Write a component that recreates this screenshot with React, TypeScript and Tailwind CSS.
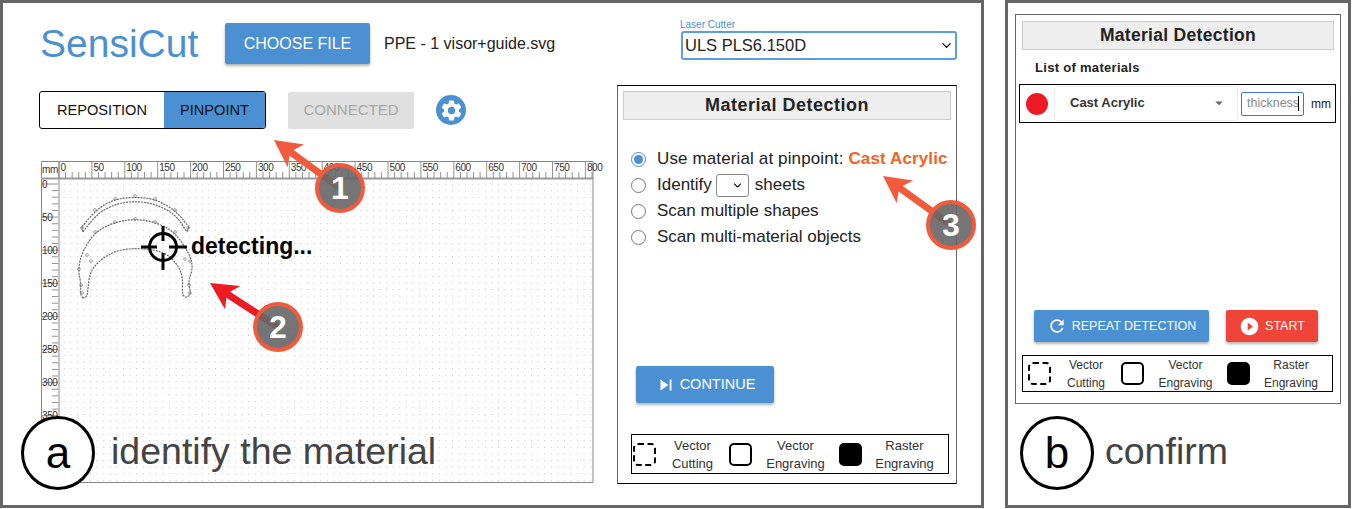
import { MdSkipNext, MdRefresh, MdPlayCircleFilled, MdArrowDropDown, MdSettings } from 'react-icons/md';
import { IoChevronDown } from 'react-icons/io5';

const sans = "font-['Liberation_Sans',Arial,sans-serif]";

type Pt = [number, number];

// smooth line through the points, used for the visor outline
function smooth(pts: Pt[], close = false) {
  const list = close ? [...pts, pts[0]] : pts;
  let d = `M${list[0][0]} ${list[0][1]}`;
  for (let i = 1; i < list.length - 1; i++) {
    const mx = (list[i][0] + list[i + 1][0]) / 2;
    const my = (list[i][1] + list[i + 1][1]) / 2;
    d += `Q${list[i][0]} ${list[i][1]} ${mx} ${my}`;
  }
  const last = list[list.length - 1];
  return `${d}L${last[0]} ${last[1]}`;
}

const visorOuter: Pt[] = [[41, 66], [54, 49], [74, 38], [94, 36], [114, 38], [134, 49], [148, 66]];
const visorInner: Pt[] = [[42, 71], [54, 54], [74, 43], [94, 40], [114, 43], [134, 53], [146, 71]];
const guide: Pt[] = [
  [42, 137], [39, 134], [40, 122], [37, 109], [41, 91], [54, 71], [74, 61], [94, 58], [114, 61], [134, 71],
  [149, 94], [152, 107], [147, 121], [150, 132], [146, 137], [141, 134], [142, 117], [137, 104], [124, 91],
  [99, 87], [76, 89], [59, 99], [49, 111], [47, 127], [46, 136],
];
const bumps: Pt[] = [
  [54, 49], [74, 38], [94, 35], [114, 38], [134, 49], [147, 67], [41, 67], [54, 71], [74, 61], [94, 58], [114, 61],
  [134, 71], [149, 100], [38, 108], [40, 124], [41, 132], [148, 124], [149, 132], [46, 94], [50, 100], [144, 98],
];

function Legend({ className, widths }: { className: string; widths: [string, string, string] }) {
  const items = [
    { a: 'Vector', b: 'Cutting', box: 'border-2 border-dashed border-black' },
    { a: 'Vector', b: 'Engraving', box: 'border-2 border-black' },
    { a: 'Raster', b: 'Engraving', box: 'border-2 border-black bg-black' },
  ];
  return (
    <div className={`flex items-center border border-black leading-[18px] text-[#333] ${className}`}>
      {items.map((it, i) => (
        <div key={i} className={`flex items-center ${widths[i]}`}>
          <div className={`h-[23px] w-[23px] shrink-0 rounded-[5px] ${it.box}`} />
          <div className="flex-1 text-center">
            <div>{it.a}</div>
            <div>{it.b}</div>
          </div>
        </div>
      ))}
    </div>
  );
}

function Title({ className }: { className: string }) {
  return (
    <div className={`flex h-[29px] items-center justify-center border border-[#ccc] bg-[#eeeeee] font-bold text-[#222] ${className}`}>
      Material Detection
    </div>
  );
}

function Radio({ on }: { on?: boolean }) {
  return (
    <span className={`flex h-[15px] w-[15px] shrink-0 items-center justify-center rounded-full border ${on ? 'border-[#4a90d2]' : 'border-[#777]'} bg-white`}>
      {on && <span className="h-[9px] w-[9px] rounded-full bg-[#4a90d2]" />}
    </span>
  );
}

function Ruler() {
  const step = 6.58;
  const xs = Array.from({ length: 82 }, (_, i) => i);
  const ys = Array.from({ length: 47 }, (_, i) => i);
  return (
    <svg width="553" height="323" viewBox="0 0 553 323" className="block overflow-visible">
      <defs>
        <pattern id="dots" x="3" y="3" width="6.58" height="6.58" patternUnits="userSpaceOnUse">
          <rect width="1" height="1" fill="#c0c0c0" />
        </pattern>
      </defs>
      <rect x="18" y="17" width="534" height="304" fill="url(#dots)" />
      <path d="M0.5 322V0.5H552V321.5H18M18 0V322" fill="none" stroke="#888" />
      <path d="M0 17.5H552" stroke="#999" strokeWidth="2" />
      <text x="1" y="12" fontSize="10" letterSpacing="-0.3" fill="#333">mm</text>
      {xs.map((i) => {
        const x = 18 + i * step;
        const major = i % 5 === 0;
        if (x > 552) return null;
        return (
          <g key={i}>
            <line x1={x} x2={x} y1={major ? 1 : 11} y2={17} stroke="#777" strokeWidth="0.8" />
            {major && (
              <text x={x + 1.5} y={10} fontSize="10" letterSpacing="-0.4" fill="#333">
                {i * 10}
              </text>
            )}
          </g>
        );
      })}
      {ys.map((i) => {
        const y = 23 + i * 6.62;
        const major = i % 5 === 0;
        if (y > 320) return null;
        return (
          <g key={i}>
            <line x1={major ? 1 : 11} x2={17} y1={y} y2={y} stroke="#777" strokeWidth="0.8" />
            {major && (
              <text x={1} y={y + 3.5} fontSize="10" letterSpacing="-0.4" fill="#333">
                {i * 10}
              </text>
            )}
          </g>
        );
      })}
      {/* visor + guide, drawn in ruler coordinates */}
      <g fill="none" stroke="#666" strokeWidth="1.2" strokeDasharray="2 1">
        <path d={smooth(visorOuter)} />
        <path d={smooth(visorInner)} />
        <path d="M41 66L42 71M148 66L146 71" />
        <path d={smooth(guide, true)} />
        {bumps.map(([x, y], i) => (
          <circle key={i} cx={x} cy={y} r="1.4" strokeDasharray="none" strokeWidth="0.6" />
        ))}
      </g>
      {/* crosshair */}
      <g fill="none" stroke="#000" strokeWidth="3">
        <circle cx="122" cy="86" r="13.5" />
        <path d="M100 86H116M128 86H146M122 65V80M122 92V109" />
      </g>
    </svg>
  );
}

function Callouts() {
  const calls = [
    { n: '1', cx: 340, cy: 188, tx: 274, ty: 140, color: '#f15a3c' },
    { n: '2', cx: 278, cy: 327, tx: 210, ty: 283, color: '#ed1c24' },
    { n: '3', cx: 951, cy: 225, tx: 883, ty: 176, color: '#f15a3c' },
  ];
  return (
    <>
      <svg width="1352" height="509" className="pointer-events-none absolute left-0 top-0">
        {calls.map((c) => {
          const dx = c.cx - c.tx;
          const dy = c.cy - c.ty;
          const len = Math.hypot(dx, dy);
          const ux = dx / len;
          const uy = dy / len;
          const bx = c.tx + ux * 27;
          const by = c.ty + uy * 27;
          return (
            <g key={c.n}>
              <line x1={c.tx + ux * 18} y1={c.ty + uy * 18} x2={c.cx} y2={c.cy} stroke={c.color} strokeWidth="7" />
              <polygon
                points={`${c.tx},${c.ty} ${bx - uy * 14},${by + ux * 14} ${c.tx + ux * 20},${c.ty + uy * 20} ${bx + uy * 14},${by - ux * 14}`}
                fill={c.color}
              />
            </g>
          );
        })}
      </svg>
      {calls.map((c) => (
        <div
          key={c.n}
          className="absolute flex h-[50px] w-[50px] items-center justify-center rounded-full border-[4px] border-[#f15a3c] bg-[#666666]/90 text-[32px] font-bold text-white"
          style={{ left: c.cx - 25, top: c.cy - 25 }}
        >
          {c.n}
        </div>
      ))}
    </>
  );
}

export default function App() {
  return (
    <div className={`relative flex h-[509px] w-[1352px] gap-[21px] overflow-hidden bg-white ${sans}`}>
      {/* panel a */}
      <div className="relative h-[508px] w-[984px] shrink-0 border-[3px] border-[#666]">
        <div className="ml-[37px] mr-[24px] mt-[20px] flex h-[41px] items-center">
          <div className="w-[185px] text-[39px] leading-none text-[#4a90d2]">SensiCut</div>
          <button className="h-[41px] w-[145px] rounded-[2px] bg-[#4a90d2] text-[16px] text-white shadow-[0_2px_3px_rgba(0,0,0,0.3)]">
            CHOOSE FILE
          </button>
          <span className="ml-[14px] text-[16px] text-[#222]">PPE - 1 visor+guide.svg</span>
          <div className="relative ml-auto mt-[3px] flex h-[29px] w-[276px] items-center justify-between rounded-[3px] border-2 border-[#5a9fdc] pl-[2px] pr-[2px] text-[16.5px] text-[#222]">
            <span className="absolute -left-[3px] -top-[14px] text-[10px] leading-[12px] text-[#4a90d2]">Laser Cutter</span>
            ULS PLS6.150D
            <IoChevronDown className="text-[13px] text-black" />
          </div>
        </div>

        <div className="mt-[21px] flex">
          <div className="ml-[36px] w-[578px]">
            <div className="mt-[6px] flex items-center">
              <div className="flex h-[38px] w-[227px] overflow-hidden rounded-[3px] border border-black pt-px text-[14.6px]">
                <div className="flex w-[124px] items-center justify-center text-[#111]">REPOSITION</div>
                <div className="-mt-px flex flex-1 items-center justify-center bg-[#4a90d2] pt-px text-[#111]">PINPOINT</div>
              </div>
              <div className="ml-[22px] flex h-[37px] w-[126px] items-center justify-center rounded-[2px] bg-[#e0e0e0] text-[15px] text-[#a6a6a6]">
                CONNECTED
              </div>
              <div className="ml-[22px] flex h-[30px] w-[30px] items-center justify-center rounded-full bg-[#4a90d2]">
                <MdSettings className="text-[25px] text-white" />
              </div>
            </div>
            <div className="ml-[2px] mt-[32px]">
              <Ruler />
            </div>
          </div>

          {/* material card */}
          <div className="flex h-[399px] w-[340px] flex-col border border-black border-x-[#666] p-[5px]">
            <Title className="text-[18px] tracking-[0.5px]" />
            <div className="ml-[8px] mt-[26px] flex flex-col text-[17px] leading-[26px] text-[#222]">
              <label className="flex items-center gap-[11px]">
                <Radio on />
                <span className="tracking-[0.13px]">
                  Use material at pinpoint: <b className="font-bold text-[#f26522]">Cast Acrylic</b>
                </span>
              </label>
              <label className="flex items-center gap-[11px]">
                <Radio />
                <span>Identify</span>
                <span className="-ml-[7px] flex h-[23px] w-[33px] items-center justify-end rounded-[3px] border border-[#888] pr-[5px]">
                  <IoChevronDown className="text-[11px] text-black" />
                </span>
                <span className="-ml-[5px]">sheets</span>
              </label>
              <label className="flex items-center gap-[11px]">
                <Radio />
                <span>Scan multiple shapes</span>
              </label>
              <label className="flex items-center gap-[11px]">
                <Radio />
                <span>Scan multi-material objects</span>
              </label>
            </div>
            <button className="ml-[13px] mt-[116px] flex h-[37px] w-[138px] items-center justify-center gap-[3px] rounded-[2px] bg-[#4a90d2] text-[14.5px] text-white shadow-[0_2px_3px_rgba(0,0,0,0.3)]">
              <MdSkipNext className="text-[22px]" />
              CONTINUE
            </button>
            <Legend className="ml-[8px] mt-[31px] h-[40px] w-[318px] pl-[1px] pt-px text-[13px]" widths={['w-[96px]', 'w-[110px]', 'w-[108px]']} />
          </div>
        </div>

        {/* a label over the canvas */}
        <div className="absolute left-[18px] top-[413px] flex items-center gap-[16px]">
          <div className="flex h-[74px] w-[74px] items-center justify-center rounded-full border-[3px] border-black bg-white pb-px text-[44px] leading-none text-black">
            a
          </div>
          <span className="-mt-[2px] text-[37.5px] leading-none text-[#444]">identify the material</span>
        </div>

        <span className="absolute left-[188px] top-[232px] text-[23px] font-bold leading-none text-black">detecting...</span>
      </div>

      {/* panel b */}
      <div className="relative h-[508px] w-[346px] shrink-0 border-[3px] border-[#666]">
        <div className="ml-[7px] mt-[11px] flex h-[390px] w-[326px] flex-col border border-[#666] px-[6px] pt-[6px]">
          <Title className="text-[17.5px] tracking-[0.3px]" />
          <div className="ml-[13px] mt-[10px] text-[13px] font-bold leading-[16px] tracking-[0.3px] text-[#222]">List of materials</div>
          <div className="-ml-[3px] mt-[8px] flex h-[39px] w-[317px] items-center border border-black">
            <span className="ml-[6px] h-[22px] w-[22px] shrink-0 rounded-full bg-[#ed1c24]" />
            <div className="ml-[6px] flex h-[35px] w-[184px] items-center justify-between rounded-[3px] border border-[#eee] pb-px pl-[15px] pr-[9px] text-[13px] font-bold text-[#333]">
              Cast Acrylic
              <MdArrowDropDown className="text-[18px] text-[#666]" />
            </div>
            <div className="ml-[3px] flex h-[24px] w-[63px] items-center rounded-[2px] border-[1.5px] border-[#3f78c9] pl-[5px] text-[12.5px] text-[#888]">
              thickness
              <span className="ml-[-1px] h-[15px] w-px bg-black" />
            </div>
            <span className="ml-[7px] text-[12px] text-[#222]">mm</span>
          </div>
          <div className="ml-[12px] mt-[187px] flex gap-[17px]">
            <button className="flex h-[32px] w-[175px] items-center justify-center gap-[5px] rounded-[2px] bg-[#4a90d2] text-[12.5px] text-white shadow-[0_2px_3px_rgba(0,0,0,0.3)]">
              <MdRefresh className="text-[20px]" />
              REPEAT DETECTION
            </button>
            <button className="flex h-[32px] w-[92px] items-center justify-center gap-[5px] rounded-[2px] bg-[#f04438] text-[12.5px] text-white shadow-[0_2px_3px_rgba(0,0,0,0.3)]">
              <MdPlayCircleFilled className="text-[21px]" />
              START
            </button>
          </div>
          <Legend className="mt-[13px] h-[37px] w-[311px] pl-[5px] text-[12px]" widths={['w-[93px]', 'w-[106px]', 'w-[105px]']} />
        </div>
        <div className="absolute left-[12px] top-[413px] flex items-center gap-[11px]">
          <div className="flex h-[74px] w-[74px] items-center justify-center rounded-full border-[3px] border-black bg-white text-[44px] leading-none text-black">
            b
          </div>
          <span className="-mt-[2px] text-[37.5px] leading-none text-[#444]">confirm</span>
        </div>
      </div>

      <Callouts />
    </div>
  );
}
